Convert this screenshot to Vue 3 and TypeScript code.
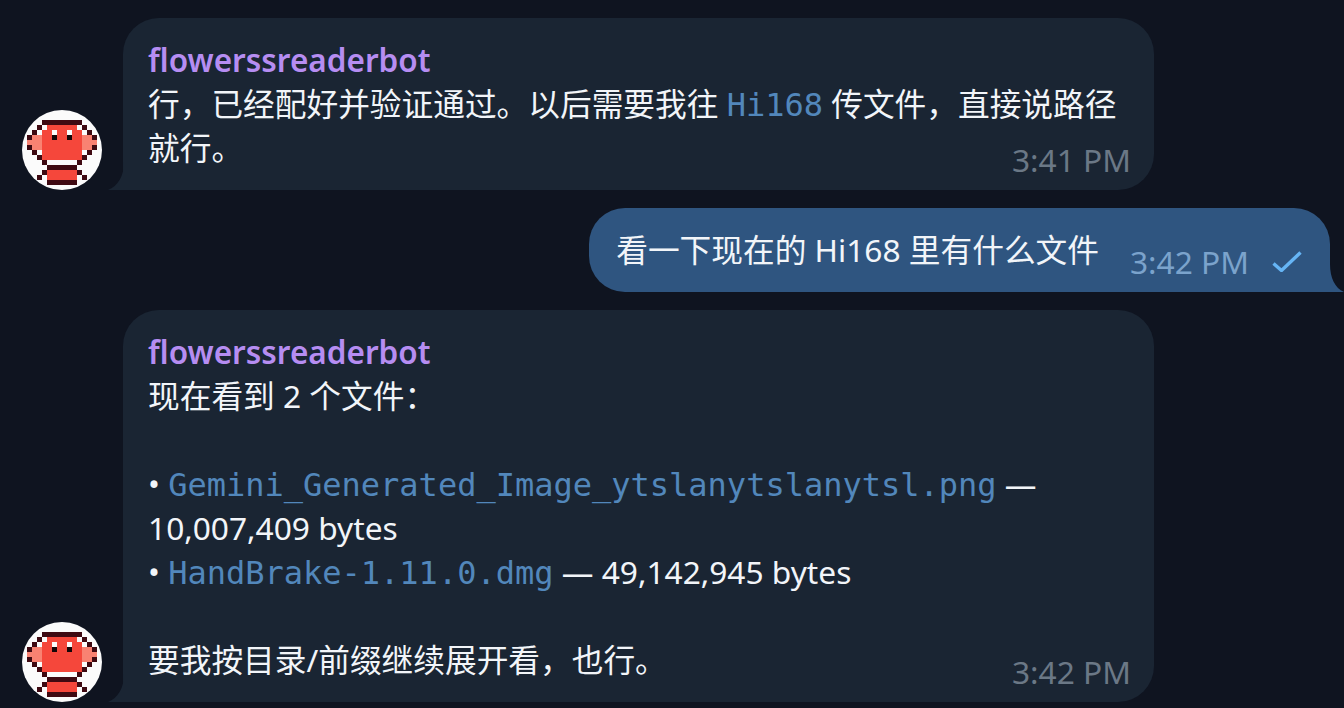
<template>
  <div class="chat">
    <div class="row incoming">
      <svg class="avatar" viewBox="0 0 16 16" shape-rendering="crispEdges">
        <circle cx="8" cy="8" r="8" fill="#fbfbfb" shape-rendering="auto" />
        <rect v-for="(p, i) in pixels" :key="i" :x="p.x" :y="p.y" width="1.02" height="1.02" :fill="p.fill" />
      </svg>
      <div class="bubble">
        <svg class="tail" viewBox="0 0 16 28"><path d="M16 0 C16 14 10 24 0 28 L16 28 Z" /></svg>
        <div class="name">flowerssreaderbot</div>
        <div class="line">行，已经配好并验证通过。以后需要我往 <span class="code">Hi168</span> 传文件，直接说路径就行。</div>
        <span class="time">3:41 PM</span>
      </div>
    </div>

    <div class="row outgoing">
      <div class="bubble out">
        <svg class="tail" viewBox="0 0 14 28"><path d="M0 0 C0 14 5 24 14 28 L0 28 Z" /></svg>
        <div class="line">看一下现在的 Hi168 里有什么文件</div>
        <div class="meta">
          <span class="time-out">3:42 PM</span>
          <svg class="check" viewBox="0 0 30 21" fill="none"><path d="M1.5 12.5 L9.5 19.5 L28.5 1.5" /></svg>
        </div>
      </div>
    </div>

    <div class="row incoming">
      <svg class="avatar" viewBox="0 0 16 16" shape-rendering="crispEdges">
        <circle cx="8" cy="8" r="8" fill="#fbfbfb" shape-rendering="auto" />
        <rect v-for="(p, i) in pixels" :key="i" :x="p.x" :y="p.y" width="1.02" height="1.02" :fill="p.fill" />
      </svg>
      <div class="bubble">
        <svg class="tail" viewBox="0 0 16 28"><path d="M16 0 C16 14 10 24 0 28 L16 28 Z" /></svg>
        <div class="name">flowerssreaderbot</div>
        <div class="line">现在看到 2 个文件：</div>
        <div class="line blank"></div>
        <div class="line">• <span class="code">Gemini_Generated_Image_ytslanytslanytsl.png</span> — 10,007,409 bytes</div>
        <div class="line">• <span class="code">HandBrake-1.11.0.dmg</span> — 49,142,945 bytes</div>
        <div class="line blank"></div>
        <div class="line">要我按目录/前缀继续展开看，也行。</div>
        <span class="time">3:42 PM</span>
      </div>
    </div>
  </div>
</template>

<script setup lang="ts">
// d = outline, r = body, l = cheek, w = white, k = pupil
const sprite = [
  '................',
  '................',
  '....dddddddd....',
  '...dwrrrrrrwd...',
  '..dwrrwrrwrrwd..',
  '.dllrrkrrkrrlld.',
  '.lllrrrrrrrrlll.',
  '.dllrrrrrrrrlld.',
  '..dwrrrrrrrrwd..',
  '...drrrrrrrrd...',
  '....dwwwwwwd....',
  '.....dddddd.....',
  '....drrrrrrd....',
  '...dwrrrrrrwd...',
  '.....dddddd.....',
  '................',
]

const colors: Record<string, string> = {
  d: '#3f0a12',
  r: '#f5473b',
  l: '#f98272',
  w: '#fbfbfb',
  k: '#120608',
}

const pixels = sprite.flatMap((row, y) =>
  [...row].flatMap((c, x) => (colors[c] ? [{ x, y, fill: colors[c] }] : [])),
)
</script>

<style>
html,
body {
  background: #0f1420;
}
</style>

<style scoped>
.chat {
  display: flex;
  flex-direction: column;
  gap: 18px;
  padding: 18px 14px 0 22px;
  font-family: 'Noto Sans', 'Noto Sans CJK SC', sans-serif;
  font-size: 31.7px;
  line-height: 44px;
  color: #f2f5f9;
}

.row {
  display: flex;
  align-items: flex-end;
}

.outgoing {
  justify-content: flex-end;
}

.avatar {
  width: 80px;
  height: 80px;
  flex: none;
  margin-right: 21px;
}

.bubble {
  position: relative;
  width: 1031px;
  box-sizing: border-box;
  padding: 20px 24px 20px 25px;
  background: #1a2533;
  border-radius: 36px 36px 36px 0;
}

.bubble.out {
  width: auto;
  display: flex;
  padding: 20px 28px 20px 27px;
  background: #2f5580;
  border-radius: 36px 36px 0 36px;
}

.tail {
  position: absolute;
  left: -15px;
  bottom: 0;
  width: 16px;
  height: 28px;
  fill: #1a2533;
}

.out .tail {
  left: auto;
  right: -14px;
  width: 14px;
  fill: #2f5580;
}

.name {
  font-weight: 600;
  font-size: 31.5px;
  color: #b68df2;
}

.blank {
  height: 44px;
}

.code {
  font-family: 'DejaVu Sans Mono', monospace;
  font-size: 32px;
  color: #5287bb;
  line-height: 1;
}

.time {
  position: absolute;
  right: 23px;
  bottom: 20px;
  line-height: 20px;
  color: #6b7886;
}

.meta {
  display: flex;
  align-items: center;
  align-self: flex-end;
  margin-left: 31px;
  line-height: 20px;
}

.time-out {
  color: #7ba3cc;
}

.check {
  width: 30px;
  height: 21px;
  margin-left: 23px;
  stroke: #66b5f5;
  stroke-width: 3.4;
}
</style>
